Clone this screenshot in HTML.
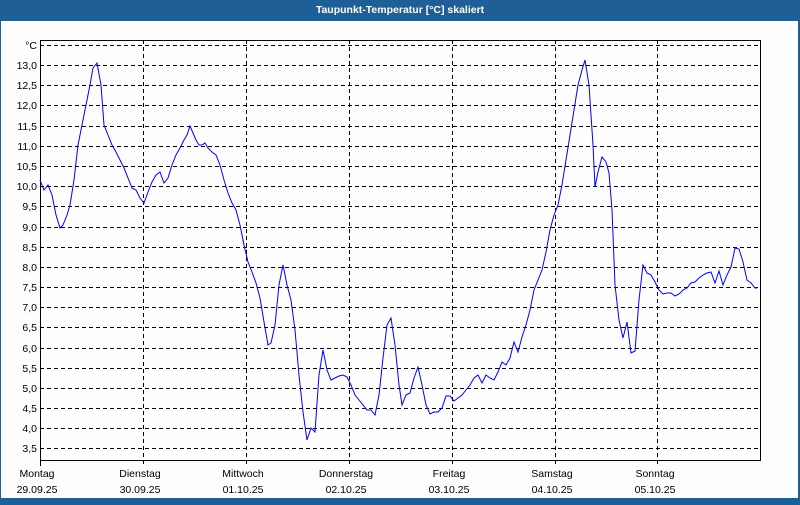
<!DOCTYPE html>
<html><head><style>
body{margin:0;width:800px;height:500px;overflow:hidden;background:#1d5f96;font-family:"Liberation Sans",sans-serif}
</style></head><body>
<svg width="800" height="500" xmlns="http://www.w3.org/2000/svg" font-family="Liberation Sans, sans-serif" font-size="10.5">
<rect x="0" y="0" width="800" height="500" fill="#1d5f96"/>
<text x="400" y="13" fill="#fff" font-weight="bold" font-size="10.5" text-anchor="middle">Taupunkt-Temperatur [°C] skaliert</text>
<rect x="1" y="21" width="797" height="477" fill="#fdfdfd"/>
<g stroke="#000" stroke-dasharray="4,3" stroke-width="1">
<line x1="40" y1="45.5" x2="760" y2="45.5"/>
<g id="h"></g>
</g>
<g stroke="#000" stroke-dasharray="4,3" stroke-width="1" shape-rendering="crispEdges">
<line x1="40" x2="760" y1="65.5" y2="65.5"/><line x1="40" x2="760" y1="85.5" y2="85.5"/><line x1="40" x2="760" y1="105.5" y2="105.5"/><line x1="40" x2="760" y1="126.5" y2="126.5"/><line x1="40" x2="760" y1="146.5" y2="146.5"/><line x1="40" x2="760" y1="166.5" y2="166.5"/><line x1="40" x2="760" y1="186.5" y2="186.5"/><line x1="40" x2="760" y1="206.5" y2="206.5"/><line x1="40" x2="760" y1="227.5" y2="227.5"/><line x1="40" x2="760" y1="247.5" y2="247.5"/><line x1="40" x2="760" y1="267.5" y2="267.5"/><line x1="40" x2="760" y1="287.5" y2="287.5"/><line x1="40" x2="760" y1="307.5" y2="307.5"/><line x1="40" x2="760" y1="327.5" y2="327.5"/><line x1="40" x2="760" y1="348.5" y2="348.5"/><line x1="40" x2="760" y1="368.5" y2="368.5"/><line x1="40" x2="760" y1="388.5" y2="388.5"/><line x1="40" x2="760" y1="408.5" y2="408.5"/><line x1="40" x2="760" y1="428.5" y2="428.5"/><line x1="40" x2="760" y1="448.5" y2="448.5"/>
<line x1="143.5" x2="143.5" y1="40" y2="466"/><line x1="246.5" x2="246.5" y1="40" y2="466"/><line x1="349.5" x2="349.5" y1="40" y2="466"/><line x1="452.5" x2="452.5" y1="40" y2="466"/><line x1="555.5" x2="555.5" y1="40" y2="466"/><line x1="657.5" x2="657.5" y1="40" y2="466"/>
</g>
<g fill="none" stroke="#000" shape-rendering="crispEdges">
<path d="M40.5 40.5H760.5V460.5H40.5Z"/>
<line x1="40.5" y1="460" x2="40.5" y2="466"/>
</g>
<g text-anchor="end" fill="#000">
<text x="37" y="49">°C</text>
<text x="37" y="69">13,0</text><text x="37" y="89">12,5</text><text x="37" y="109">12,0</text><text x="37" y="130">11,5</text><text x="37" y="150">11,0</text><text x="37" y="170">10,5</text><text x="37" y="190">10,0</text><text x="37" y="210">9,5</text><text x="37" y="231">9,0</text><text x="37" y="251">8,5</text><text x="37" y="271">8,0</text><text x="37" y="291">7,5</text><text x="37" y="311">7,0</text><text x="37" y="331">6,5</text><text x="37" y="352">6,0</text><text x="37" y="372">5,5</text><text x="37" y="392">5,0</text><text x="37" y="412">4,5</text><text x="37" y="432">4,0</text><text x="37" y="452">3,5</text>
</g>
<g text-anchor="middle" fill="#000">
<text x="37" y="477">Montag</text><text x="37" y="493">29.09.25</text>
<text x="140" y="477">Dienstag</text><text x="140" y="493">30.09.25</text>
<text x="243" y="477">Mittwoch</text><text x="243" y="493">01.10.25</text>
<text x="346" y="477">Donnerstag</text><text x="346" y="493">02.10.25</text>
<text x="449" y="477">Freitag</text><text x="449" y="493">03.10.25</text>
<text x="552" y="477">Samstag</text><text x="552" y="493">04.10.25</text>
<text x="655" y="477">Sonntag</text><text x="655" y="493">05.10.25</text>
</g>
<polyline fill="none" stroke="#0000ff" stroke-width="1" points="40,180 44,190 48,185 52,195 56,215 60,228 63,225 67,215 70,205 74,180 78,145 82,125 86,105 90,85 93,68 97,63 101,85 104,125 108,135 112,145 116,152 120,160 124,168 128,178 132,188 136,190 140,198 144,203 148,192 152,182 156,175 160,172 164,183 168,178 172,165 176,155 180,148 184,140 187,135 190,126 193,133 196,140 199,145 202,145 205,143 208,148 212,152 216,155 220,165 224,180 228,193 232,203 236,210 240,225 244,245 248,262 252,272 256,283 260,298 264,322 268,345 271,343 275,325 279,285 283,265 287,285 291,300 295,330 299,375 303,412 307,440 311,428 315,432 319,375 323,350 327,370 331,380 335,378 339,376 343,375 347,377 351,385 355,395 359,400 363,405 367,410 371,410 375,415 379,395 383,358 387,325 391,318 395,345 399,385 402,405 406,395 410,393 414,378 418,367 422,385 426,405 430,414 434,412 438,412 442,408 446,396 450,396 454,401 458,398 462,395 466,390 470,385 474,378 478,375 482,383 486,375 490,378 494,380 498,372 502,362 506,365 510,358 514,342 518,352 522,337 526,325 530,310 534,290 538,280 542,270 546,252 550,230 554,215 558,205 562,185 566,160 570,135 574,110 578,85 582,70 585,60 589,85 593,145 595,187 598,172 602,157 606,162 609,173 612,210 615,285 619,320 623,338 627,322 631,353 635,351 639,300 643,265 647,273 651,275 655,282 659,290 663,294 667,293 671,293 675,296 679,294 683,290 687,288 691,283 695,282 699,278 703,275 707,273 711,272 715,283 719,271 723,285 727,275 731,267 735,248 739,249 743,262 747,280 751,283 755,288 757,288"/>
</svg>
</body></html>
